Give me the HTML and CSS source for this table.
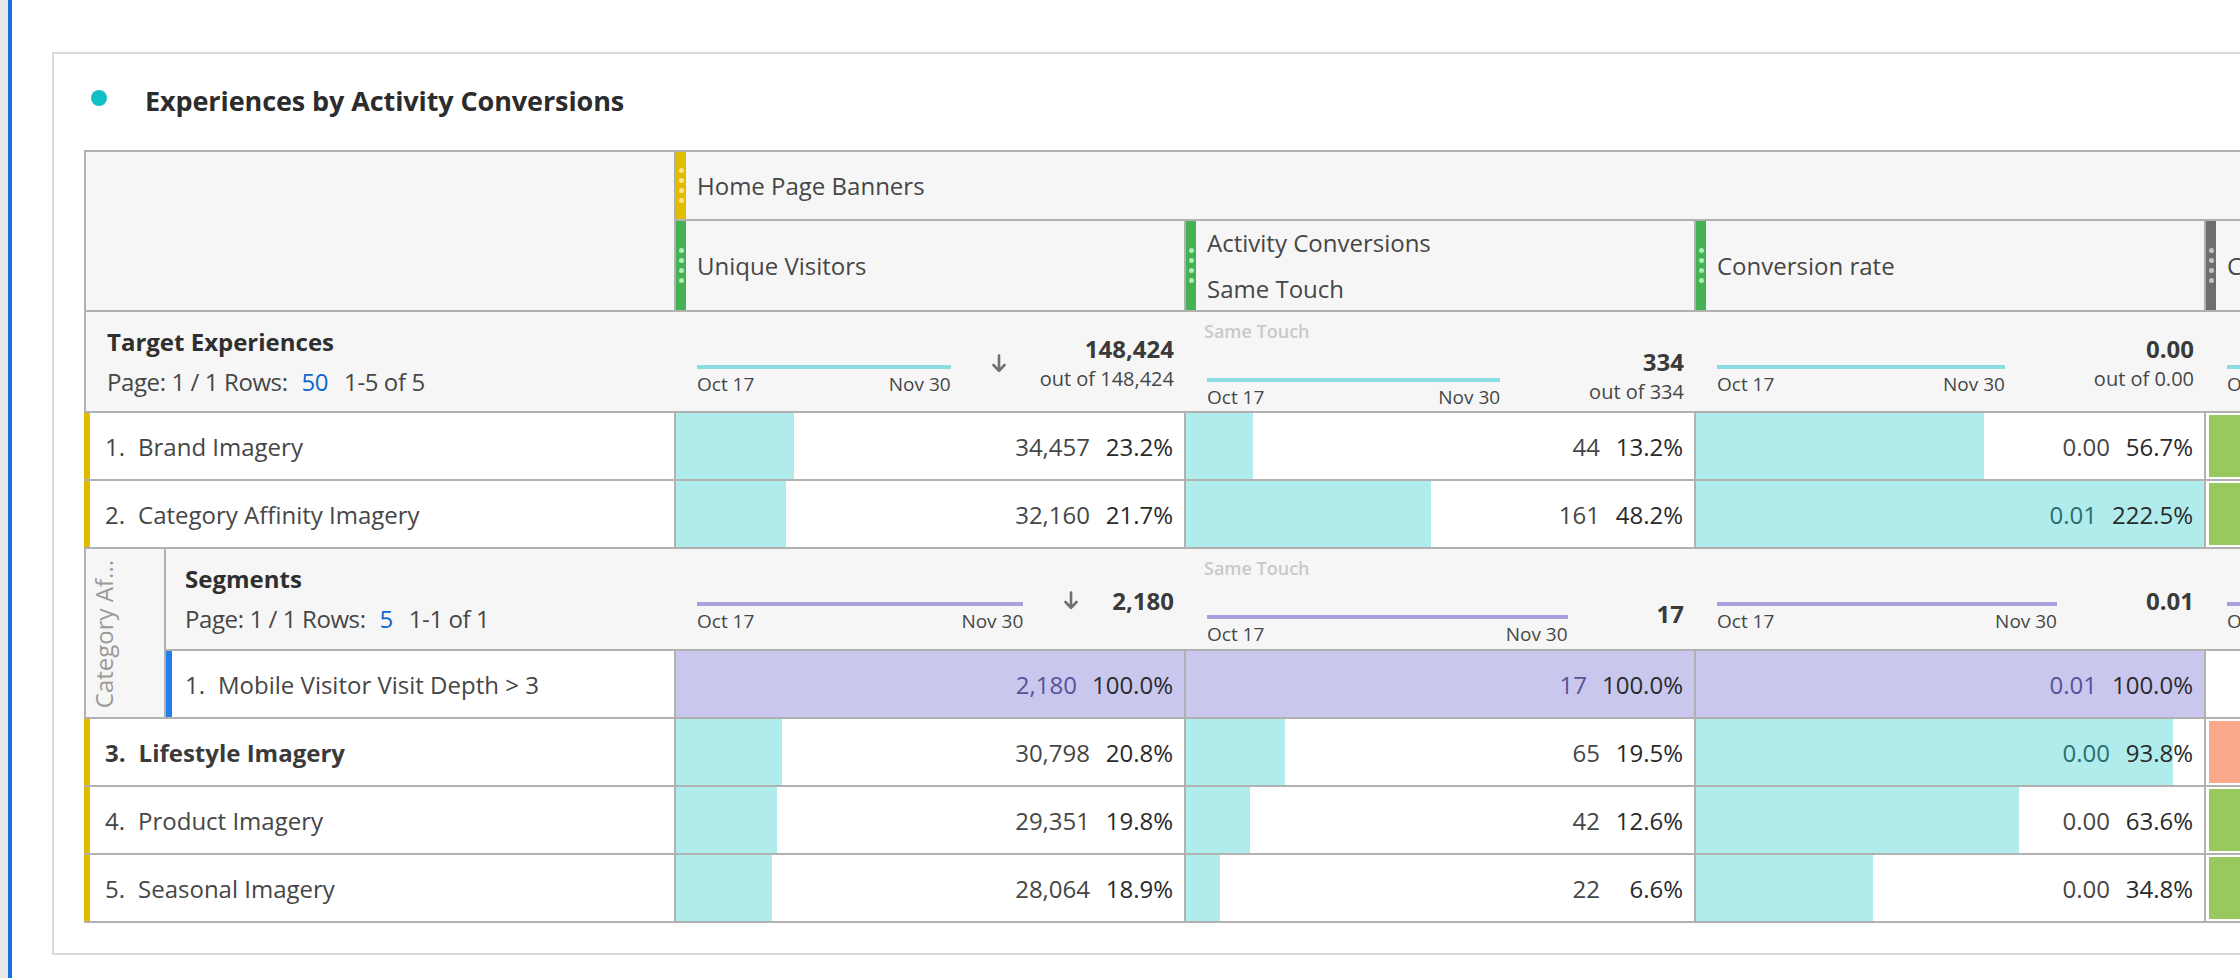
FILE: index.html
```html
<!DOCTYPE html>
<html lang="en">
<head>
<meta charset="utf-8">
<title>Experiences by Activity Conversions</title>
<link rel="stylesheet" href="styles.css">
</head>
<body>
<div class="page">
  <div class="rail"></div>
  <main class="workspace">
    <section class="panel">
      <div class="panel-head">
        <span class="dot"></span>
        <h1 class="title">Experiences by Activity Conversions</h1>
      </div>

      <div class="ftable">
        <!-- header -->
        <div class="thead">
          <div class="head-corner"></div>
          <div class="head-right">
            <div class="hrow1">
              <div class="hcell hspan">
                <span class="handle yellow"><i></i><i></i><i></i><i></i></span>
                <span class="htext">Home Page Banners</span>
              </div>
            </div>
            <div class="hrow2">
              <div class="hcell">
                <span class="handle green"><i></i><i></i><i></i><i></i></span>
                <span class="htext">Unique Visitors</span>
              </div>
              <div class="hcell">
                <span class="handle green"><i></i><i></i><i></i><i></i></span>
                <span class="htext">Activity Conversions<br>Same Touch</span>
              </div>
              <div class="hcell">
                <span class="handle green"><i></i><i></i><i></i><i></i></span>
                <span class="htext">Conversion rate</span>
              </div>
              <div class="hcell">
                <span class="handle gray"><i></i><i></i><i></i><i></i></span>
                <span class="htext">Confidence (Conversion rate)</span>
              </div>
            </div>
          </div>
        </div>

        <!-- summary: Target Experiences -->
        <div class="srow">
          <div class="sc0">
            <div class="dim">Target Experiences</div>
            <div class="meta">Page: 1 / 1 Rows: <span class="lnk">50</span>1-5 of 5</div>
          </div>
          <div class="scell">
            <div class="sbody">
              <div class="spark"><div class="sline cyan"></div><div class="sdates"><span>Oct 17</span><span>Nov 30</span></div></div>
              <div class="sort"><svg width="16" height="20" viewBox="0 0 16 20"><path d="M8 1.5v15M2.5 11l5.5 5.8 5.5-5.8" fill="none" stroke="#707070" stroke-width="2.6" stroke-linecap="round" stroke-linejoin="round"/></svg></div>
              <div class="totals"><div class="tot">148,424</div><div class="outof">out of 148,424</div></div>
            </div>
          </div>
          <div class="scell">
            <div class="slabel">Same Touch</div>
            <div class="sbody">
              <div class="spark"><div class="sline cyan"></div><div class="sdates"><span>Oct 17</span><span>Nov 30</span></div></div>
              <div class="sort"></div>
              <div class="totals"><div class="tot">334</div><div class="outof">out of 334</div></div>
            </div>
          </div>
          <div class="scell">
            <div class="sbody">
              <div class="spark"><div class="sline cyan"></div><div class="sdates"><span>Oct 17</span><span>Nov 30</span></div></div>
              <div class="sort"></div>
              <div class="totals"><div class="tot">0.00</div><div class="outof">out of 0.00</div></div>
            </div>
          </div>
          <div class="scell">
            <div class="sbody">
              <div class="spark"><div class="sline cyan"></div><div class="sdates"><span>Oct 17</span><span>Nov 30</span></div></div>
              <div class="sort"></div>
              <div class="totals"><div class="tot">0.00</div><div class="outof">out of 0.00</div></div>
            </div>
          </div>
        </div>

        <!-- row 1 -->
        <div class="drow">
          <div class="dc0"><span class="num">1.</span>Brand Imagery</div>
          <div class="dcell cy" style="--w:23.2%"><span class="v">34,457</span><span class="p">23.2%</span></div>
          <div class="dcell cy" style="--w:13.2%"><span class="v">44</span><span class="p">13.2%</span></div>
          <div class="dcell cy" style="--w:56.7%"><span class="v">0.00</span><span class="p">56.7%</span></div>
          <div class="ccell"><div class="sw good"></div></div>
        </div>

        <!-- row 2 -->
        <div class="drow">
          <div class="dc0"><span class="num">2.</span>Category Affinity Imagery</div>
          <div class="dcell cy" style="--w:21.7%"><span class="v">32,160</span><span class="p">21.7%</span></div>
          <div class="dcell cy" style="--w:48.2%"><span class="v">161</span><span class="p">48.2%</span></div>
          <div class="dcell cy" style="--w:100%"><span class="v on">0.01</span><span class="p">222.5%</span></div>
          <div class="ccell"><div class="sw good"></div></div>
        </div>

        <!-- breakdown -->
        <div class="brk">
          <div class="brk-side"><span class="vlabel">Category Af...</span></div>
          <div class="brk-rows">
            <div class="srow nested">
              <div class="sc0">
                <div class="dim">Segments</div>
                <div class="meta">Page: 1 / 1 Rows: <span class="lnk">5</span>1-1 of 1</div>
              </div>
              <div class="scell">
                <div class="sbody">
                  <div class="spark"><div class="sline purple"></div><div class="sdates"><span>Oct 17</span><span>Nov 30</span></div></div>
                  <div class="sort"><svg width="16" height="20" viewBox="0 0 16 20"><path d="M8 1.5v15M2.5 11l5.5 5.8 5.5-5.8" fill="none" stroke="#707070" stroke-width="2.6" stroke-linecap="round" stroke-linejoin="round"/></svg></div>
                  <div class="totals"><div class="tot">2,180</div></div>
                </div>
              </div>
              <div class="scell">
                <div class="slabel">Same Touch</div>
                <div class="sbody">
                  <div class="spark"><div class="sline purple"></div><div class="sdates"><span>Oct 17</span><span>Nov 30</span></div></div>
                  <div class="sort"></div>
                  <div class="totals"><div class="tot">17</div></div>
                </div>
              </div>
              <div class="scell">
                <div class="sbody">
                  <div class="spark"><div class="sline purple"></div><div class="sdates"><span>Oct 17</span><span>Nov 30</span></div></div>
                  <div class="sort"></div>
                  <div class="totals"><div class="tot">0.01</div></div>
                </div>
              </div>
              <div class="scell">
                <div class="sbody">
                  <div class="spark"><div class="sline purple"></div><div class="sdates"><span>Oct 17</span><span>Nov 30</span></div></div>
                  <div class="sort"></div>
                  <div class="totals"><div class="tot">0.00</div></div>
                </div>
              </div>
            </div>
            <div class="drow nested">
              <div class="dc0 seg"><span class="num">1.</span>Mobile Visitor Visit Depth &gt; 3</div>
              <div class="dcell pu" style="--w:100%"><span class="v pv">2,180</span><span class="p">100.0%</span></div>
              <div class="dcell pu" style="--w:100%"><span class="v pv">17</span><span class="p">100.0%</span></div>
              <div class="dcell pu" style="--w:100%"><span class="v pv">0.01</span><span class="p">100.0%</span></div>
              <div class="ccell"><div class="sw"></div></div>
            </div>
          </div>
        </div>

        <!-- row 3 -->
        <div class="drow">
          <div class="dc0 strong"><span class="num">3.</span>Lifestyle Imagery</div>
          <div class="dcell cy" style="--w:20.8%"><span class="v">30,798</span><span class="p">20.8%</span></div>
          <div class="dcell cy" style="--w:19.5%"><span class="v">65</span><span class="p">19.5%</span></div>
          <div class="dcell cy" style="--w:93.8%"><span class="v on">0.00</span><span class="p">93.8%</span></div>
          <div class="ccell"><div class="sw bad"></div></div>
        </div>

        <!-- row 4 -->
        <div class="drow">
          <div class="dc0"><span class="num">4.</span>Product Imagery</div>
          <div class="dcell cy" style="--w:19.8%"><span class="v">29,351</span><span class="p">19.8%</span></div>
          <div class="dcell cy" style="--w:12.6%"><span class="v">42</span><span class="p">12.6%</span></div>
          <div class="dcell cy" style="--w:63.6%"><span class="v">0.00</span><span class="p">63.6%</span></div>
          <div class="ccell"><div class="sw good"></div></div>
        </div>

        <!-- row 5 -->
        <div class="drow">
          <div class="dc0"><span class="num">5.</span>Seasonal Imagery</div>
          <div class="dcell cy" style="--w:18.9%"><span class="v">28,064</span><span class="p">18.9%</span></div>
          <div class="dcell cy" style="--w:6.6%"><span class="v">22</span><span class="p">6.6%</span></div>
          <div class="dcell cy" style="--w:34.8%"><span class="v">0.00</span><span class="p">34.8%</span></div>
          <div class="ccell"><div class="sw good"></div></div>
        </div>
      </div>
    </section>
  </main>
</div>
</body>
</html>
```

FILE: styles.css
```css
* { box-sizing: border-box; }

html, body {
  margin: 0;
  padding: 0;
  height: 100%;
  overflow: hidden;
  background: #ffffff;
}

body {
  font-family: "Open Sans", "Liberation Sans", sans-serif;
  color: #464646;
}

.page {
  display: flex;
  height: 978px;
}

.rail {
  width: 12px;
  flex: none;
  background: #e8e8e8;
  border-right: 4px solid #1473e6;
}

.workspace {
  flex: 1;
  min-width: 0;
  padding: 52px 0 0 40px;
}

.panel {
  border: 2px solid #dadada;
  border-right: none;
  padding: 0 0 30px 30px;
}

.panel-head {
  height: 92px;
  margin-bottom: 4px;
  display: flex;
  align-items: center;
  padding-left: 7px;
}

.dot {
  width: 16px;
  height: 16px;
  border-radius: 50%;
  background: #12bfc7;
  flex: none;
  margin-right: 38px;
  margin-top: -4px;
}

.title {
  margin: 0;
  font-size: 27px;
  font-weight: 700;
  color: #2c2c2c;
  letter-spacing: -0.1px;
}

/* ---------- table ---------- */
.ftable {
  width: 2630px;
  border-top: 2px solid #b1b1b1;
}

.thead {
  display: flex;
  background: #f6f6f6;
  border-left: 2px solid #b1b1b1;
  border-bottom: 2px solid #b1b1b1;
}

.head-corner {
  width: 588px;
  flex: none;
}

.head-right {
  width: 2040px;
  flex: none;
}

.hrow1 {
  height: 69px;
  display: flex;
  border-bottom: 2px solid #b1b1b1;
}

.hrow2 {
  height: 89px;
  display: flex;
}

.hcell {
  width: 510px;
  flex: none;
  display: flex;
  border-left: 2px solid #b1b1b1;
}

.hcell.hspan {
  width: 2040px;
}

.handle {
  width: 10px;
  flex: none;
  display: flex;
  flex-direction: column;
  justify-content: center;
  align-items: center;
  gap: 5px;
}

.handle i {
  display: block;
  width: 5px;
  height: 5px;
  border-radius: 50%;
}

.handle.yellow { background: #e1bc00; }
.handle.yellow i { background: #f8e68c; }
.handle.green { background: #44b152; }
.handle.green i { background: #b2eabb; }
.handle.gray { background: #6e6e6e; }
.handle.gray i { background: #c4c4c4; }

.htext {
  align-self: center;
  padding-left: 11px;
  font-size: 24px;
  line-height: 46px;
  color: #464646;
  white-space: nowrap;
}

/* ---------- summary rows ---------- */
.srow {
  display: flex;
  height: 101px;
  background: #f6f6f6;
  border-left: 2px solid #b1b1b1;
  border-bottom: 2px solid #b1b1b1;
}

.srow.nested {
  height: 102px;
  border-left: none;
}

.sc0 {
  width: 588px;
  flex: none;
  padding-left: 21px;
  display: flex;
  flex-direction: column;
  justify-content: center;
}

.srow.nested .sc0 {
  width: 508px;
  padding-left: 19px;
}

.dim {
  font-size: 24px;
  line-height: 40px;
  font-weight: 700;
  color: #2f2f2f;
}

.meta {
  font-size: 24px;
  line-height: 40px;
  color: #464646;
  white-space: nowrap;
  letter-spacing: -0.4px;
}

.lnk {
  color: #0d66d0;
  margin: 0 16px 0 8px;
}

.scell {
  width: 510px;
  flex: none;
  padding: 4px 10px 0 23px;
  display: flex;
  flex-direction: column;
  justify-content: center;
}

.slabel {
  font-size: 18px;
  line-height: 22px;
  font-weight: 600;
  color: #c9c9c9;
  margin: 0 0 4px -3px;
}

.sbody {
  display: flex;
  align-items: center;
}

.spark {
  flex: 1;
  min-width: 0;
  padding-top: 32px;
}

.sline {
  height: 4px;
}

.sline.cyan { background: #8cdde2; }
.sline.purple { background: #a7a2dd; }

.sdates {
  display: flex;
  justify-content: space-between;
  margin-top: 4px;
  font-size: 19px;
  line-height: 22px;
  color: #464646;
}

.sort {
  width: 89px;
  flex: none;
  padding-left: 40px;
  display: flex;
  align-items: center;
}

.sort svg { display: block; }

.totals {
  text-align: right;
  white-space: nowrap;
}

.tot {
  font-size: 24px;
  line-height: 30px;
  font-weight: 700;
  color: #3a3a3a;
}

.outof {
  font-size: 20px;
  line-height: 30px;
  color: #464646;
}

/* ---------- data rows ---------- */
.drow {
  display: flex;
  height: 68px;
  background: #ffffff;
  border-bottom: 2px solid #b1b1b1;
}

.dc0 {
  width: 590px;
  flex: none;
  border-left: 6px solid #e0bb00;
  padding-left: 15px;
  display: flex;
  align-items: center;
  font-size: 24px;
  color: #464646;
  white-space: nowrap;
}

.dc0.seg {
  width: 508px;
  border-left-color: #2680eb;
  padding-left: 13px;
}

.dc0.strong {
  font-weight: 700;
  color: #3a3a3a;
}

.num {
  margin-right: 13px;
}

.dcell {
  width: 510px;
  flex: none;
  border-left: 2px solid #b1b1b1;
  display: flex;
  justify-content: flex-end;
  align-items: center;
  padding-right: 11px;
  font-size: 24px;
  white-space: nowrap;
  background: linear-gradient(90deg, var(--bar) var(--w), #ffffff var(--w));
}

.dcell.cy { --bar: #b0ecec; }
.dcell.pu { --bar: #c9c7ee; }

.v {
  margin-right: 15px;
  color: #464646;
}

.v.on { color: #2a6e6f; }
.v.pv { color: #57529a; }

.p {
  min-width: 68px;
  text-align: right;
  color: #2a2a2a;
}

.ccell {
  width: 510px;
  flex: none;
  border-left: 2px solid #b1b1b1;
  padding: 2px 0 2px 3px;
  display: flex;
}

.sw {
  flex: 1;
}

.sw.good { background: #97c95f; }
.sw.bad { background: #fba98b; }

/* ---------- breakdown ---------- */
.brk {
  display: flex;
}

.brk-side {
  width: 82px;
  flex: none;
  background: #f6f6f6;
  border-left: 2px solid #b1b1b1;
  border-right: 2px solid #b1b1b1;
  border-bottom: 2px solid #b1b1b1;
  display: flex;
  flex-direction: column;
  justify-content: flex-end;
  align-items: flex-start;
  padding: 0 0 9px 3px;
  overflow: hidden;
}

.vlabel {
  writing-mode: vertical-rl;
  transform: rotate(180deg);
  font-size: 24px;
  line-height: 30px;
  color: #9a9a9a;
  white-space: nowrap;
}

.brk-rows {
  display: flex;
  flex-direction: column;
}
```
